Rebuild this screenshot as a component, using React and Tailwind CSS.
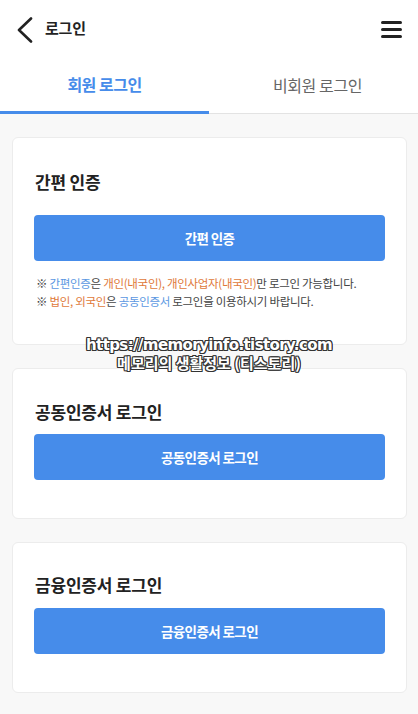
const font = { fontFamily: '"Noto Sans CJK KR", "Noto Sans", sans-serif' };

function Card({ title, label, className = "", btnClass = "", children }) {
  return (
    <section className={`ml-3 mr-[11px] rounded-md border border-[#ececec] bg-white px-[21px] ${className}`}>
      <h2 className="pl-[1px] text-[17px] font-bold leading-6 tracking-[-0.2px] text-[#222]">{title}</h2>
      <button className={`flex h-[46px] w-full items-center justify-center rounded-[4px] bg-[#468cea] text-[13.5px] font-bold tracking-[-0.6px] text-white ${btnClass}`}>
        {label}
      </button>
      {children}
    </section>
  );
}

export default function App() {
  const outline = {
    textShadow:
      "1px 0 0 #333, -1px 0 0 #333, 0 1px 0 #333, 0 -1px 0 #333, 1px 1px 0 #333, -1px -1px 0 #333, 1px -1px 0 #333, -1px 1px 0 #333",
  };
  return (
    <div style={font} className="relative min-h-[714px] w-[418px] overflow-hidden bg-[#f8f8f8]">
      <header className="flex h-[56px] items-center bg-white pl-[17px] pr-[16px]">
        <svg width="16" height="26" viewBox="0 0 16 26" className="mt-[3px] text-[#222]">
          <polyline points="14,1.5 2,13 14,24.5" fill="none" stroke="currentColor" strokeWidth="2.6" strokeLinecap="round" strokeLinejoin="round" />
        </svg>
        <h1 className="ml-[12px] text-[15px] font-bold tracking-[-0.2px] text-[#222]">로그인</h1>
        <div className="ml-auto mt-[3px] flex flex-col gap-[4px]">
          <span className="block h-[3px] w-[21px] rounded bg-[#222]" />
          <span className="block h-[3px] w-[21px] rounded bg-[#222]" />
          <span className="block h-[3px] w-[21px] rounded bg-[#222]" />
        </div>
      </header>

      <nav className="grid grid-cols-2 bg-white">
        <div className="flex h-[58px] items-center justify-center border-b-[3px] border-[#468cea] text-[16px] font-bold tracking-[-0.5px] text-[#468cea]">
          회원 로그인
        </div>
        <div className="flex h-[58px] items-center justify-center border-b border-[#e3e3e3] pb-[2px] text-[16px] tracking-[-0.4px] text-[#666]">
          <span className="mb-[-2px] ml-[8px]">비회원 로그인</span>
        </div>
      </nav>

      <div className="flex flex-col gap-[23px] pt-[23px]">
        <Card title="간편 인증" label="간편 인증" className="pt-[32px] pb-[34px]" btnClass="mt-[21px]">
          <div className="mt-[13px] pl-[2px] text-[11.5px] leading-[18px] tracking-[-0.3px] text-[#444]">
            <p>
              ※ <span className="text-[#5b97e2]">간편인증</span>은{" "}
              <span className="text-[#e0793a]">개인(내국인), 개인사업자(내국인)</span>만 로그인 가능합니다.
            </p>
            <p>
              ※ <span className="text-[#e0793a]">법인, 외국인</span>은{" "}
              <span className="text-[#5b97e2]">공동인증서</span> 로그인을 이용하시기 바랍니다.
            </p>
          </div>
        </Card>
        <Card title="공동인증서 로그인" label="공동인증서 로그인" className="pt-[31px] pb-[38px]" btnClass="mt-[10px]" />
        <Card title="금융인증서 로그인" label="금융인증서 로그인" className="pt-[30px] pb-[38px]" btnClass="mt-[11px]" />
      </div>

      <div className="pointer-events-none absolute left-0 top-[337px] w-full text-center font-bold leading-[17px] text-white" style={outline}>
        <p className="text-[15px] tracking-[-0.6px]" style={{ fontFamily: '"DejaVu Sans", sans-serif' }}>https://memoryinfo.tistory.com</p>
        <p className="text-[15px]">메모리의 생활정보 (티스토리)</p>
      </div>
    </div>
  );
}
